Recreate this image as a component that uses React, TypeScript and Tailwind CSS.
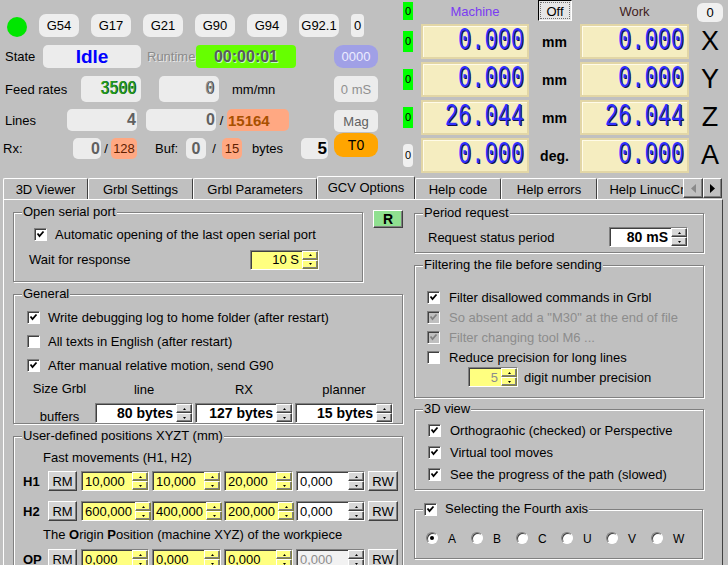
import React from "react";

const raised =
  "border border-t-white border-l-white border-r-[#404040] border-b-[#404040] shadow-[inset_-1px_-1px_0_#808080]";
const sunken =
  "border border-t-[#808080] border-l-[#808080] border-r-white border-b-white shadow-[inset_1px_1px_0_#404040]";
const etched = "border border-[#808080] shadow-[inset_1px_1px_0_#fff,1px_1px_0_#fff]";
const pill = "flex items-center bg-[#ececec] rounded-[5px]";

function Check({ on, off }: { on?: boolean; off?: boolean }) {
  return (
    <span className={`flex w-[13px] h-[13px] shrink-0 ${sunken} ${off ? "bg-[#c0c0c0]" : "bg-white"}`}>
      {on && (
        <svg viewBox="0 0 11 11" className="w-[11px] h-[11px]">
          <path d="M2.5 4.5l2 2.5 4-4.5" fill="none" stroke={off ? "#808080" : "#000"} strokeWidth="1.8" />
        </svg>
      )}
    </span>
  );
}

function Radio({ on }: { on?: boolean }) {
  return (
    <span className={`flex items-center justify-center w-[12px] h-[12px] rounded-full bg-white shrink-0 ${sunken}`}>
      {on && <span className="w-[4px] h-[4px] rounded-full bg-black" />}
    </span>
  );
}

function Arrows({ y }: { y?: boolean }) {
  const c = y ? "bg-[#ffff80] border-r-[#808040] border-b-[#808040]" : "bg-[#d8d8d8]";
  return (
    <div className="flex flex-col w-[16px] shrink-0">
      <div className={`flex-1 flex items-center justify-center ${raised} ${c}`}>
        <svg width="3" height="2" viewBox="0 0 3 2">
          <path d="M1.5 0L3 2H0z" fill="#000" />
        </svg>
      </div>
      <div className={`flex-1 flex items-center justify-center ${raised} ${c}`}>
        <svg width="3" height="2" viewBox="0 0 3 2">
          <path d="M0 0h3L1.5 2z" fill="#000" />
        </svg>
      </div>
    </div>
  );
}

function Spin({
  v,
  w,
  y,
  bold,
  dim,
  left,
}: {
  v: string;
  w: string;
  y?: boolean;
  bold?: boolean;
  dim?: boolean;
  left?: boolean;
}) {
  const bg = y ? "bg-[#ffff80]" : dim ? "bg-[#f2f2f2]" : "bg-white";
  return (
    <div className={`flex h-[20px] shrink-0 ${w} ${sunken} ${bg}`}>
      <span
        className={`flex-1 flex items-center px-[3px] ${left ? "justify-start" : "justify-end"} ${
          bold ? "font-bold text-[14px]" : "text-[13px]"
        } ${dim ? "text-[#8c8c8c]" : "text-black"}`}
      >
        {v}
      </span>
      <Arrows y={y} />
    </div>
  );
}

function Group({ title, cls, children }: { title: React.ReactNode; cls: string; children?: React.ReactNode }) {
  return (
    <div className={`relative ${etched} ${cls}`}>
      <div className="absolute -top-[9px] left-[8px] px-[1px] bg-[#c0c0c0] leading-[16px] flex items-center">
        {title}
      </div>
      {children}
    </div>
  );
}

function Btn({ t, w }: { t: string; w: string }) {
  return (
    <div className={`flex items-center justify-center h-[20px] shrink-0 bg-[#d4d4d4] ${raised} ${w}`}>{t}</div>
  );
}

function Seg({ v, cls }: { v: string; cls: string }) {
  return <span className={`inline-block font-['Liberation_Mono',monospace] scale-y-[1.4] ${cls}`}>{v}</span>;
}

const gcodes = ["G54", "G17", "G21", "G90", "G94", "G92.1"];

const axes = [
  { m: "0.000", w: "0.000", u: "mm", a: "X" },
  { m: "0.000", w: "0.000", u: "mm", a: "Y" },
  { m: "26.044", w: "26.044", u: "mm", a: "Z" },
  { m: "0.000", w: "0.000", u: "deg.", a: "A" },
];

const tabs = [
  { t: "3D Viewer", w: "w-[85px]" },
  { t: "Grbl Settings", w: "w-[105px]" },
  { t: "Grbl Parameters", w: "w-[124px]" },
  { t: "GCV Options", w: "w-[98px]", on: true },
  { t: "Help code", w: "w-[86px]" },
  { t: "Help errors", w: "w-[96px]" },
  { t: "Help LinucCr", w: "w-[100px]" },
];

const posRows = [
  { n: "H1", v: ["10,000", "10,000", "20,000"], dim: false },
  { n: "H2", v: ["600,000", "400,000", "200,000"], dim: false },
];

function PosRow({ n, v, dim }: { n: string; v: string[]; dim: boolean }) {
  return (
    <div className="flex items-center h-[20px] pl-[9px]">
      <span className="w-[25px] font-bold text-[13px]">{n}</span>
      <Btn t="RM" w="w-[29px]" />
      <div className="ml-[4px]">
        <Spin v={v[0]} w="w-[68px]" y left />
      </div>
      <div className="ml-[3px]">
        <Spin v={v[1]} w="w-[69px]" y left />
      </div>
      <div className="ml-[3px]">
        <Spin v={v[2]} w="w-[69px]" y left />
      </div>
      <div className="ml-[3px]">
        <Spin v="0,000" w="w-[69px]" left dim={dim} />
      </div>
      <div className="ml-[3px]">
        <Btn t="RW" w="w-[30px]" />
      </div>
    </div>
  );
}

export default function App() {
  return (
    <div className="w-[728px] h-[565px] overflow-hidden bg-[#c0c0c0] text-[13px] text-black font-['Liberation_Sans',Arial,sans-serif] leading-none">
      {/* header */}
      <div className="flex h-[176px]">
        <div className="w-[395px] shrink-0">
          <div className="flex items-center h-[23px] mt-[14px] pl-[7px] gap-3">
            <span className="w-[20px] h-[20px] rounded-full bg-[#00e600] mt-[2px]" />
            {gcodes.map((g) => (
              <span key={g} className="flex items-center justify-center w-[40px] h-[23px] rounded-[7px] bg-[#eeeeee]">
                {g}
              </span>
            ))}
            <span className="flex items-center justify-center w-[13px] h-[23px] rounded-[4px] bg-[#eeeeee]">0</span>
          </div>

          <div className="flex items-center h-[23px] mt-[8px]">
            <span className="w-[43px] pl-[5px]">State</span>
            <span className={`${pill} justify-center w-[98px] h-[23px] text-[19px] font-bold text-[#0000ff]`}>Idle</span>
            <span className="ml-[6px] w-[47px] text-[#8a8a8a] [text-shadow:1px_1px_0_#e8e8e8]">Runtime</span>
            <span className="ml-[2px] flex items-center justify-center w-[100px] h-[23px] rounded-[4px] bg-[#66ff00] text-[16px] font-bold text-[#5a5a5a] [text-shadow:1px_1px_0_#c0ffc0]">
              00:00:01
            </span>
            <span className="ml-[38px] flex items-center justify-center w-[44px] h-[23px] rounded-[9px] bg-[#a0a0e6] text-[#ececff]">
              0000
            </span>
          </div>

          <div className="flex items-center h-[26px] mt-[8px]">
            <span className="w-[81px] pl-[5px]">Feed rates</span>
            <span className={`${pill} justify-end pr-[5px] w-[60px] h-[26px]`}>
              <Seg v="3500" cls="text-[15px] text-[#22a022] [text-shadow:1px_0_0_#0a500a]" />
            </span>
            <span className={`${pill} justify-end pr-[5px] ml-[18px] w-[60px] h-[26px]`}>
              <Seg v="0" cls="text-[15px] text-[#8a8a8a] [text-shadow:1px_0_0_#404040]" />
            </span>
            <span className="ml-[13px] w-[102px]">mm/mn</span>
            <span className={`${pill} justify-center w-[44px] h-[26px] text-[#909090]`}>0 mS</span>
          </div>

          <div className="flex items-center h-[22px] mt-[7px]">
            <span className="w-[67px] pl-[5px]">Lines</span>
            <span className={`${pill} justify-end pr-[1px] w-[70px] h-[22px] text-[16px] font-bold text-[#606060]`}>4</span>
            <span className={`${pill} justify-end pr-[1px] ml-[9px] w-[70px] h-[22px] text-[16px] font-bold text-[#606060]`}>0</span>
            <span className="w-[11px] text-center">/</span>
            <span className="flex items-center pl-[1px] w-[62px] h-[22px] rounded-[5px] bg-[#ffa882] text-[15px] font-bold text-[#a85000]">
              15164
            </span>
            <span className={`${pill} justify-center ml-[45px] w-[44px] h-[22px] mt-[2px] text-[#606060]`}>Mag</span>
          </div>

          <div className="flex items-start h-[28px]">
            <span className="mt-[7px] h-[21px] flex items-center w-[73px] pl-[3px]">Rx:</span>
            <span className={`${pill} mt-[7px] justify-end pr-[1px] w-[28px] h-[21px] text-[16px] font-bold text-[#606060]`}>0</span>
            <span className="mt-[7px] h-[21px] flex items-center justify-center w-[10px]">/</span>
            <span className="mt-[7px] flex items-center justify-center w-[26px] h-[21px] rounded-[5px] bg-[#ffa882] text-[#602000]">128</span>
            <span className="mt-[7px] h-[21px] flex items-center ml-[18px] w-[31px]">Buf:</span>
            <span className={`${pill} mt-[7px] justify-center w-[20px] h-[21px] text-[16px] font-bold text-[#606060]`}>0</span>
            <span className="mt-[7px] h-[21px] flex items-center justify-center w-[16px]">/</span>
            <span className="mt-[7px] flex items-center justify-center w-[20px] h-[21px] rounded-[5px] bg-[#ffa882] text-[#602000]">15</span>
            <span className="mt-[7px] h-[21px] flex items-center ml-[10px] w-[49px]">bytes</span>
            <span className={`${pill} mt-[7px] justify-end pr-[1px] w-[27px] h-[21px] text-[17px] font-bold`}>5</span>
            <span className="mt-[2px] ml-[6px] flex items-center justify-center w-[44px] h-[24px] rounded-[9px] bg-[#ffa500] text-[14px]">
              T0
            </span>
          </div>
        </div>

        <div className="w-[333px] shrink-0 flex flex-col gap-[3px]">
          <div className="flex items-start h-[21px]">
            <span className="mt-[2px] ml-[8px] flex items-center justify-center w-[10px] h-[18px] bg-[#00ff00] text-[11px]">0</span>
            <span className="mt-[5px] ml-[8px] w-[108px] text-center text-[#7a3cf2]">Machine</span>
            <span className={`ml-[9px] flex w-[34px] h-[21px] bg-[#e6e6e6] border border-t-black border-l-black border-b-white border-r-white`}>
              <span className="flex flex-1 items-center justify-center m-[1px] border border-dotted border-[#707070] pt-[2px]">Off</span>
            </span>
            <span className="mt-[5px] ml-[8px] w-[109px] text-center text-[#402020]">Work</span>
            <span className="mt-[3px] ml-[8px] flex items-center justify-center w-[26px] h-[19px] rounded-[6px] bg-[#f0f0f0]">0</span>
          </div>
          {axes.map((r, i) => (
            <div key={r.a} className={`flex items-center h-[35px] ${i === 0 ? "mt-[0px]" : ""}`}>
              {r.a === "A" ? (
                <span className="ml-[8px] flex items-center justify-center w-[10px] h-[23px] rounded-[4px] bg-[#f0f0f0] text-[11px]">0</span>
              ) : (
                <span className="ml-[8px] flex items-center justify-center w-[10px] h-[21px] bg-[#00ff00] text-[11px]">0</span>
              )}
              <span className="ml-[8px] flex items-center justify-end pr-[3px] w-[108px] h-[35px] bg-[#f5edc0] border-2 border-[#e2d6a6] shadow-[inset_1px_1px_0_#fffbe8]">
                <Seg v={r.m} cls="text-[22px] text-[#3030ff] [text-shadow:1px_1px_0_#101050]" />
              </span>
              <span className="w-[51px] text-center font-bold text-[14px]">{r.u}</span>
              <span className="flex items-center justify-end pr-[3px] w-[109px] h-[35px] bg-[#f5edc0] border-2 border-[#e2d6a6] shadow-[inset_1px_1px_0_#fffbe8]">
                <Seg v={r.w} cls="text-[22px] text-[#3030ff] [text-shadow:1px_1px_0_#101050]" />
              </span>
              <span className="w-[39px] text-center text-[27px] pl-[3px]">{r.a}</span>
            </div>
          ))}
        </div>
      </div>

      {/* tabs */}
      <div className="flex items-end h-[23px] pl-[3px]">
        <div className="flex items-end w-[680px] overflow-hidden">
          {tabs.map((t) => (
            <div
              key={t.t}
              className={`relative shrink-0 flex items-center justify-center bg-[#c0c0c0] border-t border-l border-r border-t-white border-l-white border-r-[#404040] rounded-t-[2px] ${t.w} ${
                t.on ? "z-10 h-[24px] -mb-[1px] pb-[2px]" : "h-[21px]"
              }`}
            >
              {t.t}
            </div>
          ))}
        </div>
        <div className={`flex items-center justify-center w-[20px] h-[20px] mb-[1px] bg-[#c0c0c0] ${raised}`}>
          <svg width="5" height="9" viewBox="0 0 5 9">
            <path d="M5 0v9L0 4.5z" fill="#8a8a8a" />
          </svg>
        </div>
        <div className={`flex items-center justify-center w-[19px] h-[20px] mb-[1px] bg-[#c0c0c0] ${raised}`}>
          <svg width="5" height="9" viewBox="0 0 5 9">
            <path d="M0 0v9l5-4.5z" fill="#000" />
          </svg>
        </div>
      </div>

      {/* panel */}
      <div className="ml-[3px] w-[720px] h-[366px] border-t border-l border-r border-t-white border-l-white border-r-[#404040] flex pl-[9px] pt-[12px]">
        <div className="w-[390px] shrink-0 flex flex-col">
          <div className="flex items-start">
            <Group title="Open serial port" cls="w-[350px] h-[70px] pt-[13px]">
              <div className="flex items-center h-[16px] pl-[20px]">
                <Check on />
                <span className="ml-[8px]">Automatic opening of the last open serial port</span>
              </div>
              <div className="flex items-center h-[21px] mt-[7px]">
                <span className="w-[236px] pl-[15px]">Wait for response</span>
                <Spin v="10 S" w="w-[69px]" y />
              </div>
            </Group>
            <div className={`ml-[10px] -mt-[2px] flex items-center justify-center w-[30px] h-[18px] bg-[#90e090] font-bold text-[14px] ${raised}`}>
              R
            </div>
          </div>

          <Group title="General" cls="mt-[12px] w-[390px] h-[131px] pt-[10px]">
            {[
              ["Write debugging log to home folder (after restart)", true],
              ["All texts in English (after restart)", false],
              ["After manual relative motion, send G90", true],
            ].map(([t, on]) => (
              <div key={t as string} className="flex items-center h-[24px] pl-[13px]">
                <Check on={on as boolean} />
                <span className="ml-[8px]">{t as string}</span>
              </div>
            ))}
            <div className="flex items-center h-[22px]">
              <span className="w-[81px] pl-[10px] text-center">Size Grbl</span>
              <span className="w-[98px] text-center pt-[3px]">line</span>
              <span className="ml-[2px] w-[98px] text-center pt-[3px]">RX</span>
              <span className="ml-[2px] w-[98px] text-center pt-[3px]">planner</span>
            </div>
            <div className="flex items-center h-[20px] mt-[4px]">
              <span className="w-[81px] pl-[10px] text-center pt-[6px]">buffers</span>
              <Spin v="80 bytes" w="w-[98px]" bold />
              <div className="ml-[2px]">
                <Spin v="127 bytes" w="w-[98px]" bold />
              </div>
              <div className="ml-[2px]">
                <Spin v="15 bytes" w="w-[98px]" bold />
              </div>
            </div>
          </Group>

          <Group title="User-defined positions XYZT (mm)" cls="mt-[12px] w-[390px] h-[140px] pt-[12px]">
            <div className="flex items-center h-[16px] pl-[29px]">Fast movements (H1, H2)</div>
            <div className="mt-[6px]">
              <PosRow {...posRows[0]} />
            </div>
            <div className="mt-[10px]">
              <PosRow {...posRows[1]} />
            </div>
            <div className="flex items-center h-[16px] mt-[5px] pl-[29px]">
              The&nbsp;<b>O</b>rigin&nbsp;<b>P</b>osition (machine XYZ) of the workpiece
            </div>
            <div className="mt-[7px]">
              <PosRow n="OP" v={["0,000", "0,000", "0,000"]} dim />
            </div>
          </Group>
        </div>

        <div className="ml-[11px] w-[290px] shrink-0 flex flex-col pt-[1px]">
          <Group title="Period request" cls="w-[290px] h-[40px] pt-[13px]">
            <div className="flex items-center h-[20px]">
              <span className="w-[194px] pl-[13px]">Request status period</span>
              <Spin v="80 mS" w="w-[79px]" bold />
            </div>
          </Group>

          <Group title="Filtering the file before sending" cls="mt-[12px] w-[290px] h-[133px] pt-[21px]">
            {[
              ["Filter disallowed commands in Grbl", true, false],
              ['So absent add a "M30" at the end of file', true, true],
              ["Filter changing tool M6 ...", true, true],
              ["Reduce precision for long lines", false, false],
            ].map(([t, on, off]) => (
              <div key={t as string} className="flex items-center h-[20px] pl-[12px]">
                <Check on={on as boolean} off={off as boolean} />
                <span className={`ml-[9px] ${off ? "text-[#8c8c8c]" : ""}`}>{t as string}</span>
              </div>
            ))}
            <div className="flex items-center h-[20px] pl-[53px]">
              <Spin v="5" w="w-[50px]" y dim />
              <span className="ml-[6px]">digit number precision</span>
            </div>
          </Group>

          <Group title="3D view" cls="mt-[11px] w-[290px] h-[81px] pt-[9px]">
            {["Orthograohic (checked) or Perspective", "Virtual tool moves", "See the progress of the path (slowed)"].map((t) => (
              <div key={t} className="flex items-center h-[22px] pl-[13px]">
                <Check on />
                <span className="ml-[9px]">{t}</span>
              </div>
            ))}
          </Group>

          <Group
            title={
              <>
                <Check on />
                <span className="ml-[8px]">Selecting the Fourth axis</span>
              </>
            }
            cls="mt-[19px] w-[289px] h-[50px] pt-[20px]"
          >
            <div className="flex items-center h-[16px] pl-[11px]">
              {["A", "B", "C", "U", "V", "W"].map((a, i) => (
                <span key={a} className="flex items-center w-[45px] text-[12px]">
                  <Radio on={i === 0} />
                  <span className="ml-[10px] pt-[2px]">{a}</span>
                </span>
              ))}
            </div>
          </Group>
        </div>
      </div>
    </div>
  );
}
